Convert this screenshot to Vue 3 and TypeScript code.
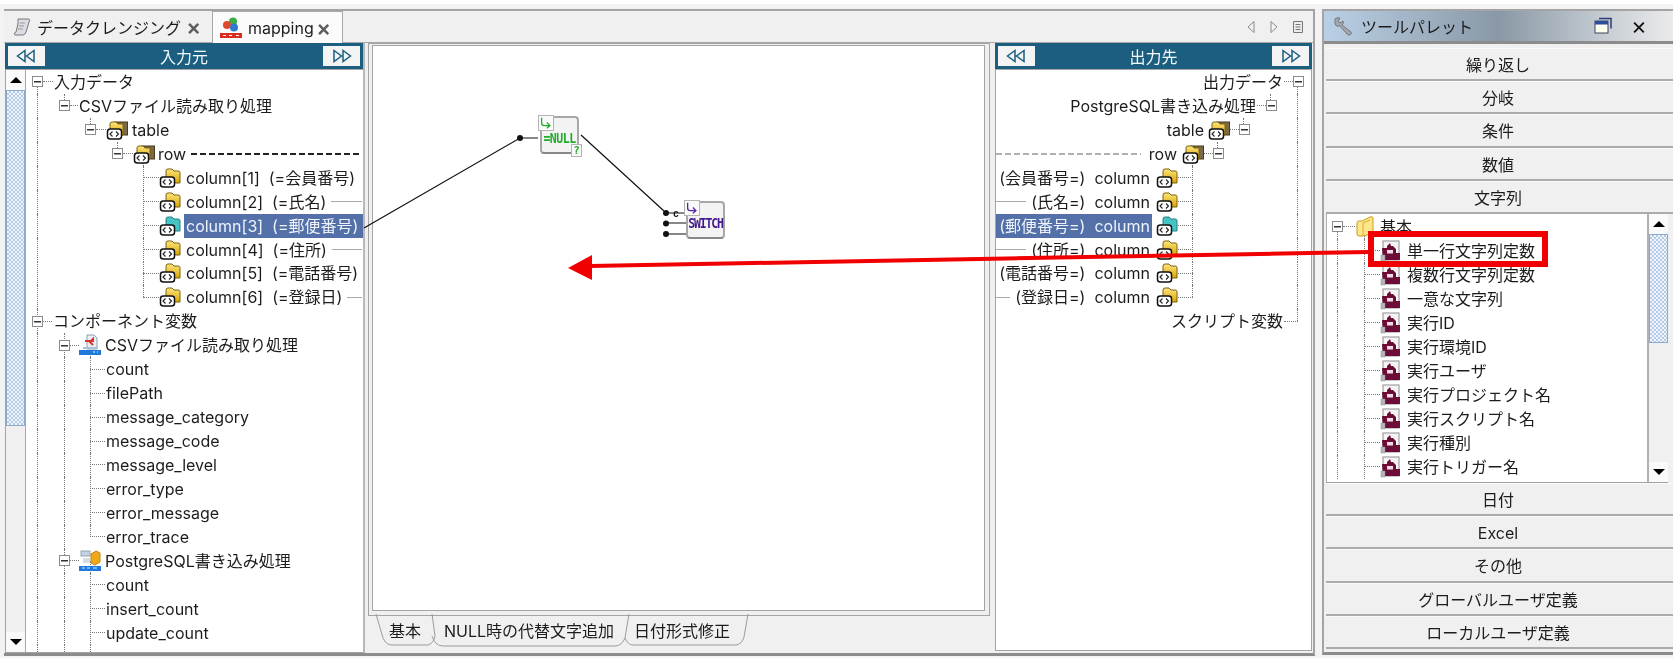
<script setup lang="ts">
type G = [number, 'f' | 't' | 'b']
interface Row {
  key: number
  pad: number
  exp: boolean
  link: number
  icon: string
  gap: number
  text: string
  guides: G[]
  sel: boolean
  trail: string
}
let n = 0
function row(c: number, exp: boolean, i: number, t: number, text: string, icon: string, guides: G[], sel = false, trail = ''): Row {
  const pad = exp ? c - 5.5 : c
  const used = pad + (exp ? 11 : 0)
  const first = icon ? i : t
  return { key: n++, pad, exp, link: Math.max(0, first - used - 1), icon, gap: icon ? t - i - 22 : 1, text, guides, sel, trail }
}
const col = (text: string, icon = '#i-col', sel = false, trail = '', last = false) =>
  row(117, false, 134, 161, text, icon, [[11, 'f'], [117, last ? 't' : 'f']], sel, trail)
const vLeaf = (text: string, last = false) =>
  row(64, false, 0, 80, text, '', [[11, 'f'], [38, 'f'], [64, last ? 't' : 'f']])

const leftRows: Row[] = [
  row(11, true, 0, 28, '入力データ', '', [[11, 'b']]),
  row(38, true, 0, 53, 'CSVファイル読み取り処理', '', [[11, 'f'], [38, 't']]),
  row(64, true, 81, 107, 'table', '#i-tbl', [[11, 'f'], [64, 't']]),
  row(91, true, 108, 133, 'row', '#i-tbl', [[11, 'f'], [91, 't'], [117, 'b']], false, 'dash'),
  col('column[1] (=会員番号)'),
  col('column[2] (=氏名)', '#i-col', false, 'line'),
  col('column[3] (=郵便番号)', '#i-sel', true),
  col('column[4] (=住所)', '#i-col', false, 'line'),
  col('column[5] (=電話番号)'),
  col('column[6] (=登録日)', '#i-col', false, 'line', true),
  row(11, true, 0, 27, 'コンポーネント変数', '', [[11, 'f']]),
  row(38, true, 54, 80, 'CSVファイル読み取り処理', '#i-csv', [[11, 'f'], [38, 'f'], [64, 'b']]),
  vLeaf('count'),
  vLeaf('filePath'),
  vLeaf('message_category'),
  vLeaf('message_code'),
  vLeaf('message_level'),
  vLeaf('error_type'),
  vLeaf('error_message'),
  vLeaf('error_trace', true),
  row(38, true, 54, 80, 'PostgreSQL書き込み処理', '#i-pg', [[11, 'f'], [38, 'f'], [64, 'b']]),
  vLeaf('count'),
  vLeaf('insert_count'),
  vLeaf('update_count'),
  vLeaf(''),
]

const rcol = (text: string, icon = '#i-col', sel = false, trail = '', last = false) =>
  row(118, false, 134, 162, text, icon, [[13, 'f'], [118, last ? 't' : 'f']], sel, trail)
const rightRows: Row[] = [
  row(13, true, 0, 28, '出力データ', '', [[13, 'b']]),
  row(40, true, 0, 55, 'PostgreSQL書き込み処理', '', [[13, 'f'], [40, 't']]),
  row(67, true, 82, 108, 'table', '#i-tbl', [[13, 'f'], [67, 't']]),
  row(93, true, 108, 135, 'row', '#i-tbl', [[13, 'f'], [93, 't'], [118, 'b']], false, 'dash'),
  rcol('(会員番号=) column'),
  rcol('(氏名=) column', '#i-col', false, 'line'),
  rcol('(郵便番号=) column', '#i-sel', true),
  rcol('(住所=) column', '#i-col', false, 'line'),
  rcol('(電話番号=) column'),
  rcol('(登録日=) column', '#i-col', false, 'line', true),
  row(13, false, 0, 28, 'スクリプト変数', '', [[13, 't']]),
]

const leaf = (text: string) => row(37, false, 54, 81, text, '#i-leaf', [[10, 'f'], [37, 'f']])
const paletteRows: Row[] = [
  row(10, true, 29, 54, '基本', '#i-folder', [[10, 'b'], [37, 'b']]),
  ...['単一行文字列定数', '複数行文字列定数', '一意な文字列', '実行ID', '実行環境ID', '実行ユーザ', '実行プロジェクト名', '実行スクリプト名', '実行種別', '実行トリガー名'].map(leaf),
]
const paletteTop = ['繰り返し', '分岐', '条件', '数値', '文字列']
const paletteBottom = ['日付', 'Excel', 'その他', 'グローバルユーザ定義', 'ローカルユーザ定義']
</script>

<template>
  <div class="root">
    <svg class="defs" width="0" height="0">
      <defs>
        <linearGradient id="fy" x1="0" y1="0" x2="0" y2="1"><stop offset="0" stop-color="#ffe680" /><stop offset="1" stop-color="#d9a400" /></linearGradient>
        <symbol id="tag" viewBox="0 0 22 22">
          <path d="M1.5 12.5q0-2.500 3-2.500h8q3 0 3 2.500v5q0 2.500-3 2.500h-8q-3 0-3-2.500z" fill="#fff" stroke="#111" stroke-width="1.500" />
          <path d="M6.500 12.500 4 15l2.500 2.500M10 12.500 12.500 15 10 17.500" fill="none" stroke="#222" stroke-width="1.100" />
        </symbol>
        <symbol id="i-col" viewBox="0 0 22 22">
          <path d="M7 4q0-2 2-2h4l2 2h4q2 0 2 1.500V16H7z" fill="url(#fy)" stroke="#7a6210" />
          <use href="#tag" width="22" height="22" />
        </symbol>
        <symbol id="i-sel" viewBox="0 0 22 22">
          <path d="M7 4q0-2 2-2h4l2 2h4q2 0 2 1.500V16H7z" fill="#45c4c4" stroke="#2a7f80" />
          <use href="#tag" width="22" height="22" />
        </symbol>
        <symbol id="i-tbl" viewBox="0 0 22 22">
          <rect x="9" y="3" width="12.500" height="13" fill="#7c6a46" stroke="#4b3a1c" />
          <path d="M4 5q0-2 2-2h4l2 2h5v11H4z" fill="url(#fy)" stroke="#7a6210" />
          <use href="#tag" width="22" height="22" />
        </symbol>
        <symbol id="i-csv" viewBox="0 0 22 22">
          <path d="M8 1h7l3 3v11H8z" fill="#e8eef4" stroke="#8fa0b0" />
          <path d="M6 7h8v-2l-3 3 3 3" fill="none" stroke="#d8342c" stroke-width="2" />
          <path d="M4 13h15v2H4z" fill="#a8c0dc" />
          <rect x="0" y="16" width="22" height="5" fill="#1f78dc" />
          <path d="M14 18h2M18 18h1" stroke="#fff" />
        </symbol>
        <symbol id="i-pg" viewBox="0 0 22 22">
          <rect x="2" y="1" width="9" height="5" fill="#c4d2e2" stroke="#94a4b4" />
          <path d="M4 8h7v5H4z" fill="#d4dce6" />
          <path d="M12 4l5-3 4 2v9l-5 3-4-2z" fill="#f0a818" stroke="#c88210" />
          <rect x="0" y="16" width="22" height="5" fill="#1f78dc" />
          <path d="M3 18h3M8 18h3M14 18h4" stroke="#cfe6ff" />
        </symbol>
        <symbol id="i-leaf" viewBox="0 0 22 22">
          <rect x="3" y="1" width="16" height="19" fill="#f4f4f4" stroke="#8e8e8e" />
          <path d="M2 8h5V6l3-3 1 3h2l3 3v4h4v7H3z" fill="#6e0c38" />
          <rect x="7" y="10" width="6" height="3.500" fill="#f2dce4" />
          <path d="M1 15h4v6H1z" fill="#b8b8b8" stroke="#888" stroke-width=".5" />
        </symbol>
        <symbol id="i-folder" viewBox="0 0 22 22">
          <path d="M2 7q0-2 2-2h3l8-4q3-1 3 1v14q0 2-2 2l-8 2H4q-2 0-2-2z" fill="#ffe68a" stroke="#c89b20" />
          <path d="M8 19V7l7-3" fill="none" stroke="#d8aa30" />
        </symbol>
        <symbol id="i-hook" viewBox="0 0 16 16">
          <path d="M3 2v6q0 3 3 3h6M9 7.500 12.500 11 9 14" fill="none" stroke="currentColor" stroke-width="1.500" />
        </symbol>
        <symbol id="i-ll" viewBox="0 0 24 14">
          <path d="M10 1.500 2.500 7l7.500 5.500zM19 1.500 11.500 7l7.500 5.500z" fill="none" stroke="#1c5e80" stroke-width="1.500" />
        </symbol>
        <symbol id="i-rr" viewBox="0 0 24 14">
          <path d="M5 1.500 12.500 7 5 12.500zM14 1.500 21.500 7 14 12.500z" fill="none" stroke="#1c5e80" stroke-width="1.500" />
        </symbol>
      </defs>
    </svg>

    <section class="main">
      <header class="tabbar">
        <div class="doc-tab">
          <svg class="tab-icon" viewBox="0 0 20 20">
            <path d="M6 2h11q1.500 1 0 3l-3 10q-1 3-3 3H3q-2-2 1-3l2-8q0-3 0-5z" fill="#dcdce4" stroke="#777" />
            <path d="M8 6h5M7 9h5M6 12h5" stroke="#999" />
          </svg>
          <span class="tab-label">データクレンジング</span>
          <span class="tab-x">×</span>
        </div>
        <div class="doc-tab active">
          <svg class="tab-icon big" viewBox="0 0 22 22">
            <circle cx="13" cy="4.500" r="4" fill="#3cae44" />
            <circle cx="7" cy="8" r="4" fill="#e0482c" />
            <circle cx="14" cy="10.500" r="4" fill="#2e78d0" />
            <rect x="0" y="16" width="22" height="5" fill="#d82c1c" />
            <path d="M3 18.500h3M9 18.500h3M16 18.500h3" stroke="#fff" />
          </svg>
          <span class="tab-label">mapping</span>
          <span class="tab-x">×</span>
        </div>
        <div class="tab-tools">
          <svg width="10" height="14" viewBox="0 0 10 14"><path d="M8 1.500 2 7l6 5.500z" fill="#f4f4f4" stroke="#888" /></svg>
          <svg width="10" height="14" viewBox="0 0 10 14"><path d="M2 1.500 8 7l-6 5.500z" fill="#f4f4f4" stroke="#888" /></svg>
          <svg width="12" height="14" viewBox="0 0 12 14"><path d="M1.500 1.500h9v11h-9zM3.500 4.500h5M3.500 7h5M3.500 9.500h5" fill="#eee" stroke="#777" /></svg>
        </div>
      </header>

      <div class="content">
        <div class="panel left">
          <div class="phead">
            <button class="pbtn"><svg width="24" height="14"><use href="#i-ll" /></svg></button>
            <span>入力元</span>
            <button class="pbtn"><svg width="24" height="14"><use href="#i-rr" /></svg></button>
          </div>
          <div class="pbody">
            <div class="sb">
              <div class="sb-btn"><i class="tri up"></i></div>
              <div class="sb-thumb left-thumb"></div>
              <div class="sb-track"></div>
              <div class="sb-btn"><i class="tri down"></i></div>
            </div>
            <div class="tree">
              <div v-for="r in leftRows" :key="r.key" class="row" :style="{ paddingLeft: r.pad + 'px' }">
                <i v-for="g in r.guides" :key="g[0]" class="guide" :class="'g-' + g[1]" :style="{ left: g[0] + 'px' }"></i>
                <span v-if="r.exp" class="box"></span>
                <span class="link" :style="{ width: r.link + 'px' }"></span>
                <svg v-if="r.icon" class="ico" width="22" height="22"><use :href="r.icon" /></svg>
                <span class="txt" :class="{ sel: r.sel }" :style="{ marginLeft: (r.sel ? r.gap - 2 : r.gap) + 'px' }">{{ r.text }}</span>
                <span v-if="r.trail" class="trail" :class="r.trail"></span>
              </div>
            </div>
          </div>
        </div>

        <div class="center">
          <div class="frame">
            <div class="canvas">
              <div class="node null-node">
                <span class="corner tl green"><svg width="14" height="14"><use href="#i-hook" /></svg></span>
                <span class="node-label">=NULL</span>
                <span class="corner br green">?</span>
              </div>
              <div class="node switch-node">
                <span class="corner tl purple"><svg width="14" height="14"><use href="#i-hook" /></svg></span>
                <span class="node-label">SWITCH</span>
              </div>
              <span class="pin-label">c</span>
            </div>
          </div>
          <div class="sheet-tabs">
            <svg class="sheet-lines" width="380" height="40" viewBox="0 0 380 40">
              <path d="M2 2 9 26q3 7 9 7h36q6-2 7-9l-3-22M58 24q3 10 11 10h173q6-1 9-8l4-24M251 26q3 7 8 7h103q6-1 8-8l4-23" fill="none" stroke="#9c9c9c" />
            </svg>
            <span class="stab s1">基本</span>
            <span class="stab s2">NULL時の代替文字追加</span>
            <span class="stab s3">日付形式修正</span>
          </div>
        </div>

        <div class="panel right">
          <div class="phead">
            <button class="pbtn"><svg width="24" height="14"><use href="#i-ll" /></svg></button>
            <span>出力先</span>
            <button class="pbtn"><svg width="24" height="14"><use href="#i-rr" /></svg></button>
          </div>
          <div class="pbody">
            <div class="tree mirror">
              <div v-for="r in rightRows" :key="r.key" class="row" :style="{ paddingRight: r.pad + 'px' }">
                <i v-for="g in r.guides" :key="g[0]" class="guide" :class="'g-' + g[1]" :style="{ right: g[0] + 'px' }"></i>
                <span v-if="r.exp" class="box"></span>
                <span class="link" :style="{ width: r.link + 'px' }"></span>
                <svg v-if="r.icon" class="ico" width="22" height="22"><use :href="r.icon" /></svg>
                <span class="txt" :class="{ sel: r.sel }" :style="{ marginRight: (r.sel ? r.gap - 2 : r.gap) + 'px' }">{{ r.text }}</span>
                <span v-if="r.trail" class="trail" :class="r.trail"></span>
              </div>
            </div>
          </div>
        </div>
      </div>
    </section>

    <aside class="palette">
      <header class="pal-head">
        <svg width="22" height="20" viewBox="0 0 22 20">
          <path d="M2 3q2-2 5-1L5 5l2 2 3-2q1 3-1 4l9 7q1 2-1 3-2 0-3-1L7 10Q3 11 2 8z" fill="#a4a8ac" stroke="#70767c" />
        </svg>
        <span class="pal-title">ツールパレット</span>
        <svg class="pal-restore" width="18" height="18" viewBox="0 0 18 18">
          <path d="M5 1.500h12v10" fill="none" stroke="#2c3c7c" stroke-width="1.500" />
          <rect x="1" y="4" width="13" height="12" fill="#fdfdf0" stroke="#3c4460" />
          <rect x="1" y="4" width="13" height="3.500" fill="#2c4c9c" />
        </svg>
        <span class="pal-close">×</span>
      </header>
      <div class="pal-stack">
        <div v-for="b in paletteTop" :key="b" class="pal-btn">{{ b }}</div>
        <div class="pal-list">
          <div class="tree pal-tree">
            <div v-for="r in paletteRows" :key="r.key" class="row" :style="{ paddingLeft: r.pad + 'px' }">
              <i v-for="g in r.guides" :key="g[0]" class="guide" :class="'g-' + g[1]" :style="{ left: g[0] + 'px' }"></i>
              <span v-if="r.exp" class="box"></span>
              <span class="link" :style="{ width: r.link + 'px' }"></span>
              <svg v-if="r.icon" class="ico" width="22" height="22"><use :href="r.icon" /></svg>
              <span class="txt" :style="{ marginLeft: r.gap + 'px' }">{{ r.text }}</span>
            </div>
          </div>
          <div class="sb">
            <div class="sb-btn"><i class="tri up"></i></div>
            <div class="sb-thumb pal-thumb"></div>
            <div class="sb-track"></div>
            <div class="sb-btn"><i class="tri down"></i></div>
          </div>
        </div>
        <div v-for="b in paletteBottom" :key="b" class="pal-btn">{{ b }}</div>
      </div>
    </aside>

    <svg class="overlay" width="1673" height="658" viewBox="0 0 1673 658">
      <g stroke="#111" fill="none" stroke-width="1.200">
        <path d="M364 228 520 138h18M581 135l83 76M666 213h18M666 223h20M666 234h20" />
      </g>
      <g fill="#111">
        <circle cx="520" cy="138" r="3" />
        <circle cx="666" cy="213" r="3" />
        <circle cx="666" cy="223.500" r="3" />
        <circle cx="666" cy="234" r="3" />
      </g>
      <path d="M1368 252 590 266" stroke="#f00000" stroke-width="4" fill="none" />
      <path d="M568 268 592 255 592 280z" fill="#f00000" />
      <rect x="1371" y="234" width="174" height="30" fill="none" stroke="#f00000" stroke-width="6" />
    </svg>
  </div>
</template>

<style scoped>
.root {
  position: relative;
  width: 1673px;
  height: 658px;
  box-sizing: border-box;
  padding: 9px 0 0 4px;
  display: flex;
  background: linear-gradient(#fff 0 4px, #f3f3f3 4px);
  font-family: "Inter", "Noto Sans CJK JP", sans-serif;
  font-size: 16px;
  color: #1c1c1c;
  overflow: hidden;
  filter: blur(0.4px);
}
.defs, .overlay { position: absolute; left: 0; top: 0; }
.overlay { pointer-events: none; }

.main {
  width: 1311px;
  height: 647px;
  box-sizing: border-box;
  background: #f0f0f0;
  border-top: 2px solid #a4a4a4;
  border-right: 2px solid #a4a4a4;
  border-bottom: 3px solid #8c8c8c;
  display: flex;
  flex-direction: column;
}
.tabbar { height: 32px; flex: none; display: flex; align-items: stretch; }
.doc-tab {
  display: flex;
  align-items: center;
  padding-left: 8px;
  width: 209px;
  box-sizing: border-box;
  border-right: 1px solid #a8a8a8;
  border-bottom: 1px solid #a8a8a8;
}
.doc-tab.active {
  width: 130px;
  background: #fbfbfb;
  border-top: 1px solid #a8a8a8;
  border-bottom: none;
  padding-left: 7px;
}
.tab-icon { width: 20px; height: 20px; margin-right: 5px; flex: none; }
.tab-icon.big { width: 22px; height: 22px; margin-right: 6px; }
.tab-label { white-space: nowrap; flex: 1; }
.tab-x { margin-right: 11px; font-size: 22px; line-height: 20px; font-weight: 600; color: #5c5c5c; }
.tab-tools {
  flex: 1;
  display: flex;
  justify-content: flex-end;
  align-items: center;
  gap: 13px;
  padding-right: 9px;
  border-bottom: 1px solid #a8a8a8;
}

.content { flex: 1; min-height: 0; display: flex; }
.panel { display: flex; flex-direction: column; box-sizing: border-box; }
.panel.left { width: 360px; margin-left: 1px; border-right: 2px solid #b8b8b8; }
.panel.right { width: 317px; margin-left: 5px; margin-bottom: 2px; }
.phead {
  height: 26px;
  flex: none;
  box-sizing: border-box;
  background: #1c5e80;
  border: 2px solid #1c5e80;
  padding: 1px;
  color: #f2f8fc;
  display: flex;
  align-items: center;
  justify-content: space-between;
}
.pbtn {
  width: 37px;
  height: 20px;
  padding: 0;
  border: none;
  background: #f4f4f4;
  display: flex;
  align-items: center;
  justify-content: center;
}
.pbody {
  flex: 1;
  min-height: 0;
  display: flex;
  background: #fff;
  border: 1px solid #a4a4a4;
  overflow: hidden;
}
.left .pbody { border-right: none; }

.sb {
  width: 19px;
  flex: none;
  display: flex;
  flex-direction: column;
  background: #f0f0f0;
  border-right: 1px solid #a8a8a8;
}
.pal-list .sb { border-right: none; border-left: 2px solid #b0b0b0; }
.sb-btn {
  height: 20px;
  flex: none;
  display: flex;
  align-items: center;
  justify-content: center;
  background: #fafafa;
}
.tri { width: 0; height: 0; border-left: 6px solid transparent; border-right: 6px solid transparent; }
.tri.up { border-bottom: 6px solid #000; }
.tri.down { border-top: 6px solid #000; }
.sb-thumb {
  flex: none;
  box-sizing: border-box;
  border: 1px solid #8fa9c8;
  background: repeating-conic-gradient(#b4cbe6 0 25%, #f0f5fb 0 50%) 0 0 / 4px 4px;
}
.left-thumb { height: 336px; }
.pal-thumb { height: 109px; }
.sb-track { flex: 1; }

.tree { flex: 1; min-width: 0; position: relative; overflow: hidden; }
.row {
  position: relative;
  height: 23.950px;
  line-height: 24px;
  display: flex;
  align-items: center;
  white-space: nowrap;
}
.pal-tree .row { height: 24px; }
.mirror .row { flex-direction: row-reverse; }
.guide { position: absolute; width: 0; border-left: 1px dotted #777; }
.g-f { top: 0; bottom: 0; }
.g-t { top: 0; height: 50%; }
.g-b { top: 50%; bottom: 0; }
.box {
  position: relative;
  width: 11px;
  height: 11px;
  flex: none;
  box-sizing: border-box;
  border: 1px solid #8c8c8c;
  background: linear-gradient(#333, #333) center / 7px 1.5px no-repeat #fff;
}
.link { flex: none; height: 0; border-top: 1px dotted #777; position: relative; }
.ico { flex: none; position: relative; }
.txt { position: relative; word-spacing: 4.500px; }
.txt.sel {
  flex: 1;
  background: #5470a8;
  color: #eef3fa;
  padding: 0 2px;
}
.mirror .txt.sel { text-align: right; }
.trail { flex: 1; margin: 0 1px 0 5px; height: 0; }
.mirror .trail { margin: 0 5px 0 0; }
.trail.line { border-top: 1px solid #aaa; }
.trail.dash {
  height: 1.500px;
  margin-left: 5px;
  background: repeating-linear-gradient(90deg, #222 0 6px, transparent 6px 9px);
}
.mirror .trail.dash {
  margin: 0 8px 0 0;
  background: repeating-linear-gradient(90deg, #b0b0b0 0 6px, transparent 6px 9px);
}

.center { width: 622px; margin-left: 3px; flex: none; display: flex; flex-direction: column; }
.frame {
  height: 573px;
  flex: none;
  box-sizing: border-box;
  border: 1px solid #a4a4a4;
  padding: 1px 4px 4px 3px;
}
.canvas { height: 100%; box-sizing: border-box; background: #fff; border: 1px solid #a4a4a4; position: relative; }
.node {
  position: absolute;
  width: 39px;
  height: 38px;
  box-sizing: border-box;
  border: 2px solid #a8a8a8;
  border-radius: 4px;
  border-bottom-color: #888;
  background: #f3f3f3;
  display: flex;
  align-items: center;
  justify-content: center;
}
.null-node { left: 167px; top: 70px; }
.switch-node { left: 313px; top: 155px; }
.node-label {
  font-family: "DejaVu Sans Mono", monospace;
  font-size: 11.500px;
  font-weight: 700;
  letter-spacing: -0.500px;
  margin-top: 5px;
  white-space: nowrap;
  transform: scaleY(1.3);
}
.null-node .node-label { color: #22ac2c; }
.switch-node .node-label { color: #43188c; letter-spacing: -1.200px; }
.corner {
  position: absolute;
  display: flex;
  align-items: center;
  justify-content: center;
  background: #fafafa;
  border: 1px solid #b4b4b4;
  box-sizing: border-box;
}
.corner.tl { left: -4px; top: -3px; width: 16px; height: 16px; }
.corner.br {
  right: -5px;
  bottom: -5px;
  width: 11px;
  height: 13px;
  font-family: "DejaVu Sans Mono", monospace;
  font-size: 11px;
  font-weight: 700;
}
.green { color: #22ac2c; }
.purple { color: #5a24a4; }
.pin-label {
  position: absolute;
  left: 300px;
  top: 164px;
  font-size: 10px;
  line-height: 10px;
  font-family: "Liberation Mono", monospace;
  font-weight: 700;
}

.sheet-tabs { position: relative; height: 37px; display: flex; padding-left: 7px; margin-top: -4px; }
.sheet-lines { position: absolute; left: 6px; top: 0; }
.stab { position: relative; height: 33px; line-height: 33px; margin-top: 3px; text-align: center; white-space: nowrap; }
.s1 { width: 60px; }
.s2 { width: 188px; }
.s3 { width: 118px; }

.palette {
  width: 351px;
  margin-left: 7px;
  height: 646px;
  flex: none;
  display: flex;
  flex-direction: column;
  border-top: 2px solid #a4a4a4;
  border-left: 2px solid #a4a4a4;
  border-bottom: 3px solid #8c8c8c;
  box-sizing: border-box;
  background: #f0f0f0;
}
.pal-head {
  height: 33px;
  flex: none;
  box-sizing: border-box;
  border-bottom: 3px solid #8c8c8c;
  display: flex;
  align-items: center;
  padding-left: 9px;
  background: linear-gradient(90deg, #bad0e6, #8998a6 50%, #cfd4d9 85%, #eaeaea);
}
.pal-title { margin-left: 6px; flex: 1; }
.pal-restore { margin-right: 19px; }
.pal-close { margin-right: 26px; font-size: 24px; line-height: 24px; color: #111; }
.pal-stack { flex: 1; min-height: 0; display: flex; flex-direction: column; margin: 4px 0 0 2px; }
.pal-btn {
  height: 33.200px;
  line-height: 32px;
  flex: none;
  box-sizing: border-box;
  text-align: center;
  border-bottom: 2px solid #ababab;
  border-top: 1px solid #fafafa;
  padding-right: 3px;
}
.pal-list {
  height: 268px;
  flex: none;
  display: flex;
  background: #fff;
  border-left: 1px solid #b0b0b0;
  border-bottom: 1px solid #a0a0a0;
  margin-right: 5px;
}
.pal-tree { padding-top: 1px; }
</style>

<style>
html, body { background: #fff; }
</style>
